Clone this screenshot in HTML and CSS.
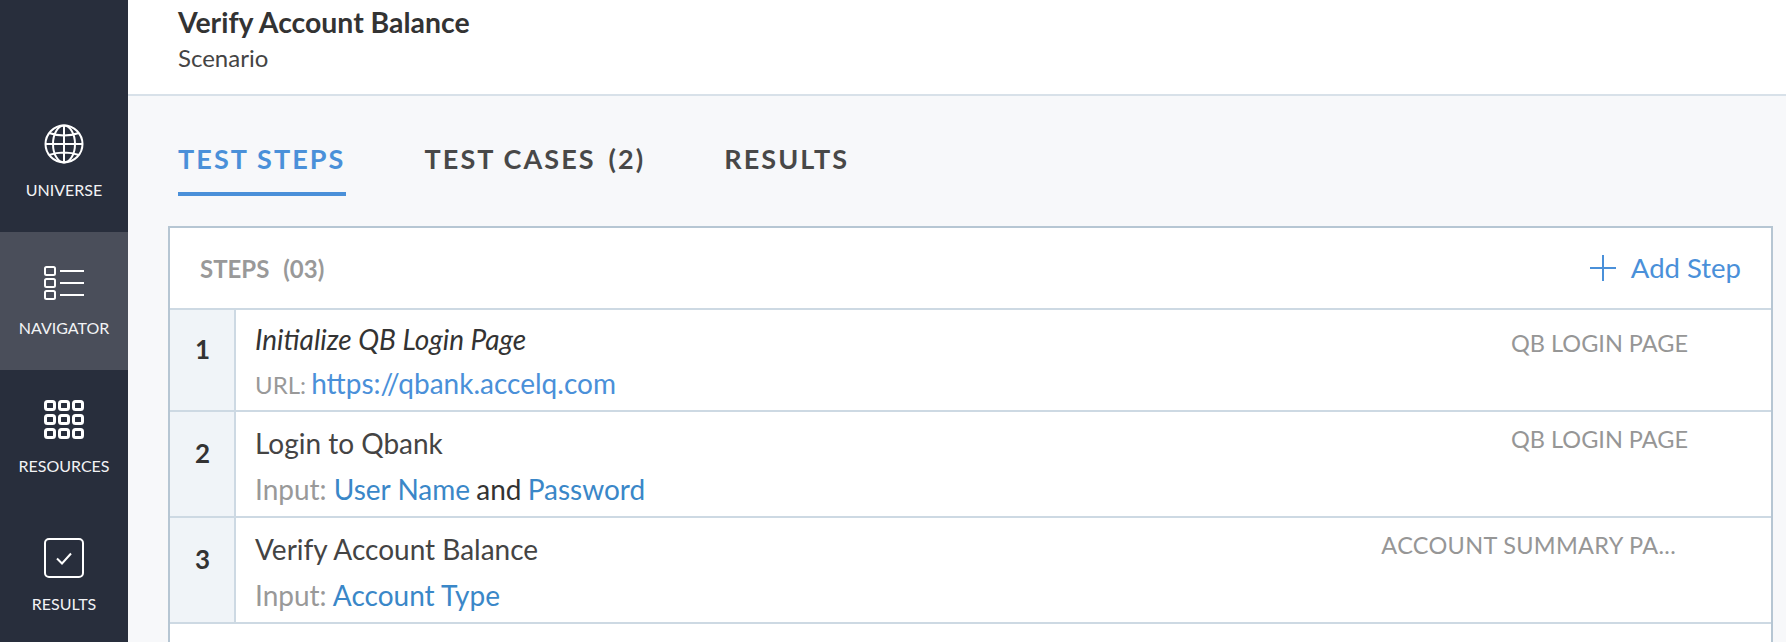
FILE: index.html
```html
<!DOCTYPE html>
<html lang="en">
<head>
    <meta charset="UTF-8">
    <meta name="viewport" content="width=device-width, initial-scale=1.0">
    <title>Verify Account Balance</title>
    <link rel="stylesheet" href="styles.css">
</head>
<body>
    <div class="app">
        <nav class="sidebar">
            <a class="nav-item">
                <svg class="nav-icon" viewBox="0 0 40 40">
                    <circle cx="20" cy="20" r="18.5"/>
                    <ellipse cx="20" cy="20" rx="11" ry="18.5"/>
                    <path d="M20 1.5v37M1.5 20h37M5 9q15 5 30 0M5 31q15-5 30 0"/>
                </svg>
                <span>UNIVERSE</span>
            </a>
            <a class="nav-item active">
                <svg class="nav-icon" viewBox="0 0 40 40">
                    <rect x="1" y="5" width="10" height="8" rx="1.5"/>
                    <rect x="1" y="17" width="10" height="8" rx="1.5"/>
                    <rect x="1" y="29" width="10" height="8" rx="1.5"/>
                    <path d="M16 9h24M16 21h24M16 33h24"/>
                </svg>
                <span>NAVIGATOR</span>
            </a>
            <a class="nav-item">
                <svg class="nav-icon thick" viewBox="0 0 40 40">
                    <rect x="1.5" y="1.5" width="9" height="8" rx="2"/>
                    <rect x="15.5" y="1.5" width="9" height="8" rx="2"/>
                    <rect x="29.5" y="1.5" width="9" height="8" rx="2"/>
                    <rect x="1.5" y="15.5" width="9" height="8" rx="2"/>
                    <rect x="15.5" y="15.5" width="9" height="8" rx="2"/>
                    <rect x="29.5" y="15.5" width="9" height="8" rx="2"/>
                    <rect x="1.5" y="29.5" width="9" height="8" rx="2"/>
                    <rect x="15.5" y="29.5" width="9" height="8" rx="2"/>
                    <rect x="29.5" y="29.5" width="9" height="8" rx="2"/>
                </svg>
                <span>RESOURCES</span>
            </a>
            <a class="nav-item">
                <svg class="nav-icon" viewBox="0 0 40 40">
                    <rect x="1" y="1" width="38" height="38" rx="4"/>
                    <path d="M13 20.5l5 5 9-10"/>
                </svg>
                <span>RESULTS</span>
            </a>
        </nav>

        <main class="main">
            <header class="page-header">
                <h1>Verify Account Balance</h1>
                <p>Scenario</p>
            </header>

            <div class="tabs">
                <a class="tab active">TEST STEPS</a>
                <a class="tab">TEST CASES <span class="tab-count">(2)</span></a>
                <a class="tab">RESULTS</a>
            </div>

            <section class="panel">
                <div class="panel-header">
                    <div class="panel-title">STEPS <span class="count">(03)</span></div>
                    <a class="add-step">
                        <svg class="plus" viewBox="0 0 26 26"><path d="M13 0v26M0 13h26"/></svg>
                        <span class="add-label">Add Step</span>
                    </a>
                </div>

                <div class="step step-first">
                    <div class="step-num">1</div>
                    <div class="step-body">
                        <div class="step-title"><em>Initialize QB Login Page</em></div>
                        <div class="step-sub"><span class="sub-label small">URL:</span> <a class="url">https://qbank.accelq.com</a></div>
                    </div>
                    <div class="step-page">QB LOGIN PAGE</div>
                </div>
                <div class="step step-second">
                    <div class="step-num">2</div>
                    <div class="step-body">
                        <div class="step-title">Login to Qbank</div>
                        <div class="step-sub"><span class="sub-label">Input:</span> <a>User Name</a> <span class="join">and</span> <a>Password</a></div>
                    </div>
                    <div class="step-page">QB LOGIN PAGE</div>
                </div>
                <div class="step step-third">
                    <div class="step-num">3</div>
                    <div class="step-body">
                        <div class="step-title">Verify Account Balance</div>
                        <div class="step-sub"><span class="sub-label">Input:</span> <a>Account Type</a></div>
                    </div>
                    <div class="step-page">ACCOUNT SUMMARY PA...</div>
                </div>
            </section>
        </main>
    </div>
</body>
</html>
```

FILE: styles.css
```css
* {
    box-sizing: border-box;
}
html, body {
    margin: 0;
    height: 642px;
    overflow: hidden;
}
body {
    font-family: Lato, "Open Sans", sans-serif;
    color: #333;
    background-color: #f7f8fa;
}
.app {
    display: flex;
    height: 642px;
}

/* left nav */
.sidebar {
    width: 128px;
    flex-shrink: 0;
    padding-top: 94px;
    background-color: #282e3c;
}
.nav-item {
    display: flex;
    flex-direction: column;
    align-items: center;
    height: 138px;
    padding-top: 30px;
    color: #f2f3f5;
    font-size: 16px;
    line-height: 20px;
}
.nav-item.active {
    background-color: #4a4e5a;
}
.nav-item span {
    margin-top: 16px;
}
.nav-icon {
    width: 40px;
    height: 40px;
    fill: none;
    stroke: #fff;
    stroke-width: 2;
}
.nav-icon.thick {
    stroke-width: 3;
}

.main {
    flex: 1;
    min-width: 0;
}
.page-header {
    height: 96px;
    padding: 5px 0 0 50px;
    background-color: #fff;
    border-bottom: 2px solid #d8e1e9;
}
.page-header h1 {
    margin: 0;
    font-size: 28.4px;
    line-height: 34px;
    font-weight: 700;
}
.page-header p {
    margin: 5px 0 0;
    font-size: 24px;
    line-height: 28px;
    color: #444;
}

.tabs {
    display: flex;
    gap: 79px;
    height: 100px;
    padding: 46px 0 0 50px;
}
.tab {
    height: 54px;
    font-size: 27px;
    line-height: 34px;
    font-weight: 700;
    letter-spacing: 2.1px;
    color: #484848;
}
.tab.active {
    color: #4a90d9;
    border-bottom: 4px solid #4a90d9;
}
.tab-count {
    margin-left: 4px;
}

.panel {
    width: 1605px;
    height: 430px;
    margin-left: 40px;
    margin-top: 30px;
    background-color: #fff;
    border: 2px solid #b6c6d3;
    border-bottom: none;
}
.panel-header {
    display: flex;
    justify-content: space-between;
    align-items: center;
    height: 82px;
    padding: 0 30px 0 30px;
    border-bottom: 2px solid #cdd9e3;
}
.panel-title {
    font-size: 24px;
    font-weight: 700;
    color: #999;
}
.count {
    margin-left: 8px;
}
.add-step {
    display: flex;
    align-items: center;
    gap: 15px;
    font-size: 27.5px;
    color: #4a90d9;
}
.add-label {
    margin-top: -2px;
}
.plus {
    width: 26px;
    height: 26px;
    fill: none;
    stroke: #4a90d9;
    stroke-width: 2;
}

/* step rows */
.step {
    display: flex;
    border-bottom: 2px solid #cdd9e3;
}
.step-first { height: 102px; }
.step-second { height: 106px; }
.step-third { height: 106px; }
.step-num {
    display: flex;
    align-items: center;
    justify-content: center;
    width: 66px;
    flex-shrink: 0;
    padding: 0 0 22px 1px;
    background-color: #f0f4f8;
    border-right: 2px solid #cdd9e3;
    font-size: 26px;
    font-weight: 700;
}
.step-body {
    flex: 1;
    min-width: 0;
    padding: 13px 0 0 19px;
}
.step-second .step-body { padding-top: 15px; }
.step-third .step-body { padding-top: 15px; }
.step-title {
    font-size: 28px;
    line-height: 32px;
    color: #444;
}
.step-first .step-title {
    color: #333;
}
.step-sub {
    margin-top: 14px;
    font-size: 28px;
    line-height: 32px;
    color: #333;
}
.step-first .step-sub {
    margin-top: 12px;
}
.step-sub a {
    color: #3a87c8;
}
.step-sub a.url {
    margin-left: -2px;
    color: #4a90d9;
}
.join {
    margin: 0 -1px;
}
.sub-label {
    color: #999;
}
.sub-label.small {
    font-size: 24px;
}
.step-page {
    width: 307px;
    margin-right: 83px;
    flex-shrink: 0;
    font-size: 23.5px;
    line-height: 28px;
    color: #969696;
    text-align: right;
    white-space: nowrap;
}
.step-first .step-page { padding-top: 19px; }
.step-second .step-page { padding-top: 13px; }
.step-third .step-page {
    margin-right: 95px;
    padding-top: 13px;
    letter-spacing: 0.3px;
}
```
